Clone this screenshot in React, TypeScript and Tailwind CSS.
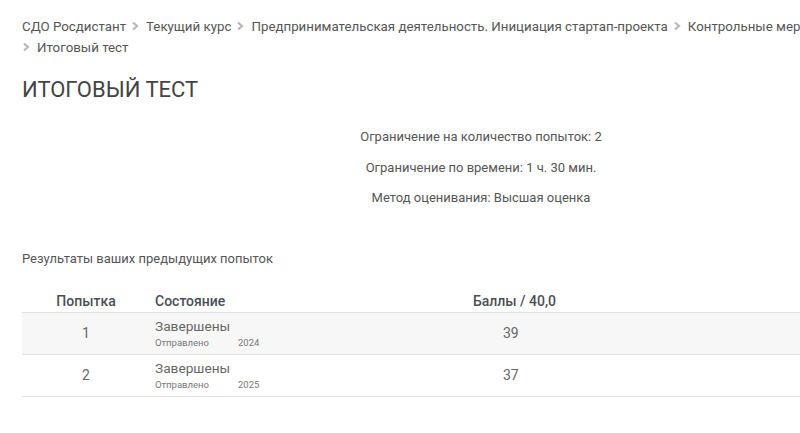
import React from "react";

const Chevron = () => (
  <svg width="8" height="10" viewBox="0 0 8 10" className="inline-block mr-[7px] align-[0px]">
    <polyline points="2,1.5 6,5 2,8.5" fill="none" stroke="#b8b8b8" strokeWidth="2.2" />
  </svg>
);

export default function App() {
  const crumbs = [
    "СДО Росдистант",
    "Текущий курс",
    "Предпринимательская деятельность. Инициация стартап-проекта",
    "Контрольные мероприятия",
    "Итоговый тест",
  ];
  return (
    <div className="w-[800px] h-[433px] overflow-hidden bg-white" style={{ fontFamily: "Roboto, 'Liberation Sans', sans-serif" }}>
      <div className="w-[940px] pl-[22px] pt-[16px] text-[#555]">
        <div className="flex flex-wrap w-[1000px] text-[13.3px] leading-[21px] text-[#555]">
          {crumbs.map((c, i) => (
            <span key={i} className={`whitespace-nowrap mr-[5px] ${i === 4 ? "basis-full" : ""}`}>
              {i > 0 && <Chevron />}
              {c}
            </span>
          ))}
        </div>
        <h1 className="mt-[18px] text-[22px] leading-[28px] text-[#444] uppercase">Итоговый тест</h1>
        <div className="mt-[23px] flex flex-col items-center gap-[11.5px] text-[13px] leading-[19px] text-[#555]">
          <p>Ограничение на количество попыток: 2</p>
          <p>Ограничение по времени: 1 ч. 30 мин.</p>
          <p>Метод оценивания: Высшая оценка</p>
        </div>
        <p className="mt-[42px] text-[13px] leading-[19px] text-[#555]">Результаты ваших предыдущих попыток</p>
        <table className="mt-[23px] w-[918px] border-collapse">
          <thead>
            <tr className="border-b border-[#dee2e6]">
              <th className="w-[128px] text-center font-medium text-[14px] text-[#4a4f55] pb-[1px] leading-[20px]">Попытка</th>
              <th className="w-[318px] text-left pl-[5px] font-medium text-[14px] text-[#4a4f55] pb-[1px] leading-[20px]">Состояние</th>
              <th className="w-[100px] text-left pl-[5px] font-medium text-[14px] text-[#4a4f55] pb-[1px] leading-[20px] whitespace-nowrap">Баллы / 40,0</th>
              <th></th>
            </tr>
          </thead>
          <tbody>
            {[
              { n: "1", y: "2024", s: "39", bg: "bg-[#f7f7f7]" },
              { n: "2", y: "2025", s: "37", bg: "bg-white" },
            ].map((r) => (
              <tr key={r.n} className={`${r.bg} border-b border-[#dee2e6] h-[42px]`}>
                <td className="text-center text-[#666] text-[14px]">{r.n}</td>
                <td className="pl-[5px] text-left align-middle">
                  <div className="text-[13.7px] leading-[16px] text-[#666]">Завершены</div>
                  <div className="mt-[2px] text-[9.5px] leading-[13px] text-[#777]">
                    <span className="inline-block w-[83px]">Отправлено</span>
                    <span>{r.y}</span>
                  </div>
                </td>
                <td className="text-left pl-[35px] text-[#666] text-[14px]">{r.s}</td>
                <td></td>
              </tr>
            ))}
          </tbody>
        </table>
      </div>
    </div>
  );
}
